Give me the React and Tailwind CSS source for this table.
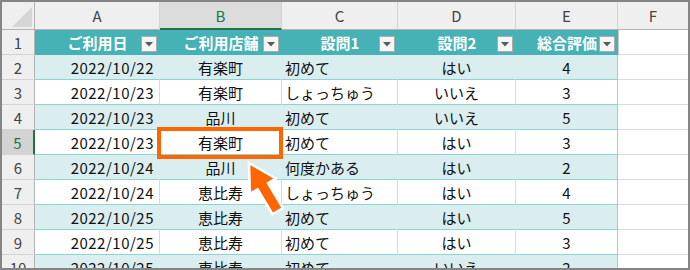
import React from 'react';

const COLS = [
  { key: 'A', w: 'w-[125px]', align: 'justify-end pr-[5px] tracking-[0.5px]' },
  { key: 'B', w: 'w-[122px]', align: 'justify-center' },
  { key: 'C', w: 'w-[116px]', align: 'justify-start pl-[3px]' },
  { key: 'D', w: 'w-[118px]', align: 'justify-center' },
  { key: 'E', w: 'w-[102px]', align: 'justify-center' },
];

const HEADERS = ['ご利用日', 'ご利用店舗', '設問1', '設問2', '総合評価'];

const ROWS = [
  ['2022/10/22', '有楽町', '初めて', 'はい', '4'],
  ['2022/10/23', '有楽町', 'しょっちゅう', 'いいえ', '3'],
  ['2022/10/23', '品川', '初めて', 'いいえ', '5'],
  ['2022/10/23', '有楽町', '初めて', 'はい', '3'],
  ['2022/10/24', '品川', '何度かある', 'はい', '2'],
  ['2022/10/24', '恵比寿', 'しょっちゅう', 'はい', '4'],
  ['2022/10/25', '恵比寿', '初めて', 'はい', '5'],
  ['2022/10/25', '恵比寿', '初めて', 'はい', '3'],
  ['2022/10/25', '恵比寿', '初めて', 'いいえ', '2'],
];

const FilterButton = () => (
  <div className="absolute right-[3px] bottom-[2px] w-[16px] h-[16px] bg-[#f6f6f6] border border-[#ababab] flex items-center justify-center">
    <svg width="8" height="5" viewBox="0 0 8 5">
      <polygon points="0,0 8,0 4,4.5" fill="#5a5a5a" />
    </svg>
  </div>
);

const RowNumber = ({ n, active }) => (
  <div
    className={
      'w-[33px] h-[25px] shrink-0 flex items-center justify-center border-b border-[#d4d4d4] ' +
      (active
        ? 'bg-[#d3d3d3] text-[#217346] border-r-2 border-r-[#217346]'
        : 'bg-[#efefef] text-[#444] border-r border-r-[#b3b3b3]')
    }
  >
    {n}
  </div>
);

const App = () => {
  return (
    <div className="relative w-[690px] h-[270px] overflow-hidden bg-white border-2 border-[#858585] font-['Noto_Sans_CJK_JP',sans-serif] text-[15px] leading-none">
      {/* column letters */}
      <div className="flex h-[28px]">
        <div className="relative w-[33px] h-[28px] shrink-0 bg-[#efefef] border-r border-b border-[#b3b3b3]">
          <svg className="absolute right-[2px] bottom-[2px]" width="20" height="20" viewBox="0 0 20 20">
            <polygon points="20,0 20,20 0,20" fill="#d6d6d6" />
          </svg>
        </div>
        {COLS.map((c) => (
          <div
            key={c.key}
            className={
              c.w +
              ' shrink-0 flex items-center justify-center border-r border-r-[#d4d4d4] ' +
              (c.key === 'B'
                ? 'bg-[#dcdcdc] text-[#217346] border-b-2 border-b-[#217346]'
                : 'bg-[#efefef] text-[#444] border-b border-b-[#b3b3b3]')
            }
          >
            {c.key}
          </div>
        ))}
        <div className="flex-1 flex items-center justify-center bg-[#efefef] text-[#444] border-b border-[#b3b3b3]">F</div>
      </div>

      {/* table header row */}
      <div className="flex h-[25px]">
        <RowNumber n={1} />
        {COLS.map((c, i) => (
          <div
            key={c.key}
            className={c.w + ' relative shrink-0 flex items-center justify-center bg-[#47b2b6] text-white font-bold border-b border-[#47b2b6]'}
          >
            <span>{HEADERS[i]}</span>
            <FilterButton />
          </div>
        ))}
        <div className="flex-1 border-l border-[#c8c8c8] border-b border-b-[#dadada]" />
      </div>

      {/* data rows */}
      {ROWS.map((row, r) => {
        const band = r % 2 === 0;
        const n = r + 2;
        return (
          <div key={n} className="flex h-[25px]">
            <RowNumber n={n} active={n === 5} />
            {COLS.map((c, i) => (
              <div
                key={c.key}
                className={
                  c.w +
                  ' shrink-0 flex items-center text-[#111] border-b border-b-[#8fd3d3] ' +
                  c.align +
                  ' ' +
                  (band ? 'bg-[#daeef0] ' : 'bg-white ') +
                  (i === 4
                    ? 'border-r border-r-[#8fd3d3]'
                    : band
                    ? 'border-r border-r-[#daeef0]'
                    : 'border-r border-r-[#dadada]')
                }
              >
                {row[i]}
              </div>
            ))}
            <div className="flex-1 border-b border-[#dadada]" />
          </div>
        );
      })}

      {/* highlight box on B5 */}
      <div className="absolute left-[155px] top-[125px] w-[126px] h-[32px] border-4 border-[#ff6600]" />

      {/* arrow */}
      <svg className="absolute left-0 top-0 pointer-events-none" width="690" height="270" viewBox="2 2 690 270">
        <polygon
          points="249,163 275.7,178.5 268,183.1 282.9,208 272.5,214.2 257.6,189.3 249.9,193.9"
          fill="#ff6600"
          stroke="#fff"
          strokeWidth="2.5"
          strokeLinejoin="miter"
        />
      </svg>
    </div>
  );
};

export default App;
